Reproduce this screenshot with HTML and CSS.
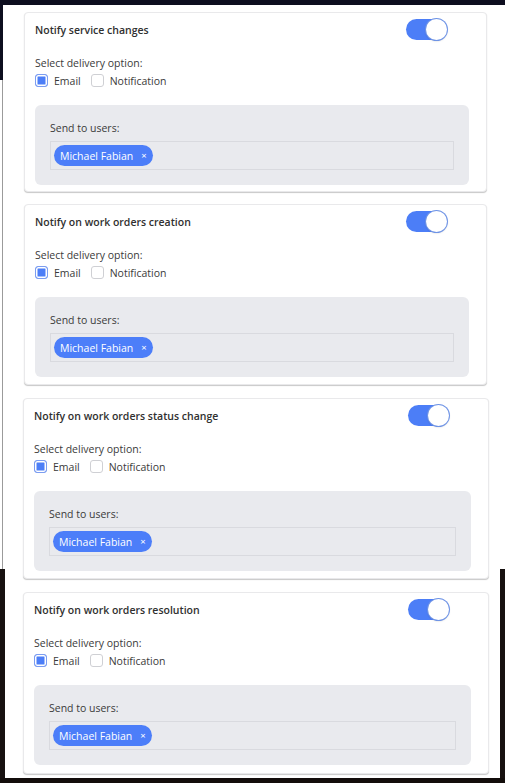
FILE: index.html
```html
<!DOCTYPE html>
<html lang="en">
<head>
<meta charset="utf-8">
<title>Notifications</title>
<link rel="stylesheet" href="styles.css">
</head>
<body>
<main class="page">
  <div class="group group-a">
    <section class="card">
      <div class="card-head">
        <h3 class="card-title">Notify service changes</h3>
        <span class="toggle"><span class="knob"></span></span>
      </div>
      <p class="label">Select delivery option:</p>
      <div class="options">
        <label class="opt"><span class="cb cb-on"></span>Email</label>
        <label class="opt"><span class="cb"></span>Notification</label>
      </div>
      <div class="panel">
        <p class="panel-label">Send to users:</p>
        <div class="users"><span class="chip">Michael Fabian<span class="chip-x">×</span></span></div>
      </div>
    </section>
    <section class="card card-mid">
      <div class="card-head">
        <h3 class="card-title">Notify on work orders creation</h3>
        <span class="toggle"><span class="knob"></span></span>
      </div>
      <p class="label">Select delivery option:</p>
      <div class="options">
        <label class="opt"><span class="cb cb-on"></span>Email</label>
        <label class="opt"><span class="cb"></span>Notification</label>
      </div>
      <div class="panel">
        <p class="panel-label">Send to users:</p>
        <div class="users"><span class="chip">Michael Fabian<span class="chip-x">×</span></span></div>
      </div>
    </section>
  </div>
  <div class="group group-b">
    <section class="card card-mid">
      <div class="card-head">
        <h3 class="card-title">Notify on work orders status change</h3>
        <span class="toggle"><span class="knob"></span></span>
      </div>
      <p class="label">Select delivery option:</p>
      <div class="options">
        <label class="opt"><span class="cb cb-on"></span>Email</label>
        <label class="opt"><span class="cb"></span>Notification</label>
      </div>
      <div class="panel">
        <p class="panel-label">Send to users:</p>
        <div class="users"><span class="chip">Michael Fabian<span class="chip-x">×</span></span></div>
      </div>
    </section>
    <section class="card card-tall">
      <div class="card-head">
        <h3 class="card-title">Notify on work orders resolution</h3>
        <span class="toggle"><span class="knob"></span></span>
      </div>
      <p class="label">Select delivery option:</p>
      <div class="options">
        <label class="opt"><span class="cb cb-on"></span>Email</label>
        <label class="opt"><span class="cb"></span>Notification</label>
      </div>
      <div class="panel">
        <p class="panel-label">Send to users:</p>
        <div class="users"><span class="chip">Michael Fabian<span class="chip-x">×</span></span></div>
      </div>
    </section>
  </div>
</main>
</body>
</html>
```
FILE: styles.css
```css
* { box-sizing: border-box; }
html, body { margin: 0; padding: 0; }
body {
  width: 505px;
  height: 783px;
  overflow: hidden;
  font-family: "Open Sans", "Noto Sans", Arial, sans-serif;
  color: #3b3b3b;
  background-color: #ffffff;
  background-image:
    linear-gradient(#130d0b, #130d0b),
    linear-gradient(#171110, #171110),
    linear-gradient(#171110, #171110),
    linear-gradient(#0d0e1f, #0d0e1f),
    linear-gradient(#0d0e1f, #0d0e1f),
    linear-gradient(#9b9b9b, #9b9b9b);
  background-repeat: no-repeat;
  background-position:
    0 778px,
    0 569px,
    500px 569px,
    0 0,
    0 0,
    2px 80px;
  background-size:
    100% 5px,
    5px 209px,
    5px 209px,
    100% 5px,
    3px 80px,
    1px 489px;
}
.page { padding-top: 12px; }
.group { display: flex; flex-direction: column; }
.group-a { margin-left: 24px; width: 463px; gap: 12px; }
.group-b { margin-left: 23px; width: 466px; gap: 13px; margin-top: 13px; }
.card {
  background: #fff;
  border: 1px solid #e9e9eb;
  border-radius: 4px;
  box-shadow: 0 1px 1px rgba(0,0,0,0.22);
  padding: 6px 17px 6px 10px;
}
.card-mid { padding-bottom: 7px; }
.card-tall { padding-bottom: 8px; }
.card-head {
  display: flex;
  align-items: center;
  justify-content: space-between;
  height: 21px;
  padding-right: 22px;
}
.card-title {
  margin: 0;
  font-size: 10.5px;
  font-weight: 600;
  color: #303030;
}
.toggle {
  width: 41px;
  height: 21px;
  border-radius: 11px;
  background: #4c7ef7;
  display: flex;
  justify-content: flex-end;
  align-items: center;
}
.knob {
  width: 21px;
  height: 21px;
  border-radius: 50%;
  background: #fff;
  box-shadow: 0 0 0 1px #6f94e6, 0 1px 2px rgba(0,0,0,0.25);
}
.label {
  margin: 15px 0 0;
  font-size: 10.5px;
  line-height: 16px;
  color: #3a3a3a;
}
.options {
  display: flex;
  gap: 10px;
  height: 17px;
  align-items: center;
  margin-top: 1px;
}
.opt {
  display: flex;
  align-items: center;
  gap: 6px;
  font-size: 10.5px;
  color: #3a3a3a;
}
.cb {
  width: 13px;
  height: 13px;
  border: 1px solid #cfd0d4;
  border-radius: 3px;
  background: #fff;
}
.cb-on {
  border-color: #7c9df0;
  background: #4c7ef7;
  box-shadow: inset 0 0 0 1.5px #fff;
}
.panel {
  margin-top: 16px;
  background: #e9eaee;
  border-radius: 6px;
  padding: 15px 15px;
}
.panel-label {
  margin: 0;
  font-size: 10.5px;
  line-height: 16px;
  color: #3a3a3a;
}
.users {
  margin-top: 5px;
  height: 29px;
  border: 1px solid #d9dadf;
  padding: 3px;
  display: flex;
  align-items: center;
}
.chip {
  display: inline-flex;
  align-items: center;
  height: 21px;
  border-radius: 11px;
  background: #4c7ef9;
  color: #fff;
  font-size: 10.5px;
  padding: 0 6px 0 6px;
  gap: 8px;
}
.chip-x { font-size: 9.5px; }
```
